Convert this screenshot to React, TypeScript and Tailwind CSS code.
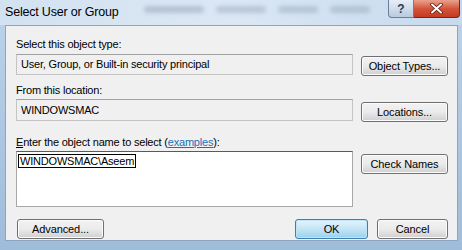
import React from "react";

const font = { fontFamily: '"Segoe UI", "Liberation Sans", Arial, sans-serif' };

function Btn({ children, className = "", primary = false }: { children: React.ReactNode; className?: string; primary?: boolean }) {
  return (
    <div
      className={
        "flex items-center justify-center rounded-[3px] border text-[11px] tracking-[-0.1px] text-black " +
        (primary
          ? "border-[#3c7fb1] bg-gradient-to-b from-[#e5f4fc] via-[#c4e5f6] to-[#98d1ef] shadow-[inset_0_0_0_1px_#bfe3f7] "
          : "border-[#707070] bg-gradient-to-b from-[#f2f2f2] via-[#ebebeb] to-[#cfcfcf] shadow-[inset_0_0_0_1px_#fcfcfc] ") +
        className
      }
    >
      {children}
    </div>
  );
}

export default function App() {
  return (
    <div className="relative w-[462px] h-[250px] overflow-hidden bg-gradient-to-b from-[#bcd3ea] to-[#9fbcdb]" style={font}>
      {/* Title bar */}
      <div className="h-[25px] flex items-start bg-gradient-to-r from-[#d3e2f1] via-[#dbe7f4] to-[#c6daee] relative">
        <div className="pl-[5px] pt-[4px] text-[12.5px] leading-[16px] tracking-[-0.2px] text-black">Select User or Group</div>
        <div className="ml-[26px] mt-[6px] flex gap-3 opacity-40 blur-[2px]">
          <div className="h-[7px] w-[60px] bg-[#7d8fa3] rounded" />
          <div className="h-[7px] w-[50px] bg-[#8799ad] rounded" />
          <div className="h-[7px] w-[40px] bg-[#8799ad] rounded" />
          <div className="h-[7px] w-[40px] bg-[#8799ad] rounded" />
        </div>
        <div className="absolute right-[2px] top-0 flex h-[18px]">
          <div className="w-[26px] h-[18px] rounded-bl-[4px] border border-t-0 border-[#6b7f99] bg-gradient-to-b from-[#e6eef7] to-[#b9cbe0] flex items-center justify-center text-[12px] text-[#2b3b55] font-bold leading-none">?</div>
          <div className="w-[46px] h-[18px] rounded-br-[4px] border border-l-0 border-t-0 border-[#6b2a22] bg-gradient-to-b from-[#e9a18f] via-[#d4553b] to-[#c43a1f] flex items-center justify-center">
            <svg width="13" height="11" viewBox="0 0 13 11">
              <path d="M2 1.5 L11 9.5 M11 1.5 L2 9.5" stroke="#5a1b10" strokeWidth="3.6" strokeLinecap="round" />
              <path d="M2 1.5 L11 9.5 M11 1.5 L2 9.5" stroke="#ffffff" strokeWidth="2" strokeLinecap="round" />
            </svg>
          </div>
        </div>
      </div>
      {/* Client */}
      <div className="ml-[5px] w-[453px] h-[216px] bg-[#f0f0f0] border border-[#8ea4bf] text-[11px] tracking-[-0.2px] text-black">
        <div className="pl-[10px] pr-[9px] pt-[10px] flex flex-col">
          <div className="h-[16px] leading-[16px]">Select this object type:</div>
          <div className="mt-[2px] flex items-start gap-[8px]">
            <div className="w-[337px] h-[21px] border border-[#c4c4c4] border-t-[#a0a0a0] bg-[#f0f0f0] pl-[4px] leading-[19px]">User, Group, or Built-in security principal</div>
            <Btn className="mt-[2px] w-[87px] h-[20px]">Object Types...</Btn>
          </div>
          <div className="mt-[6px] h-[16px] leading-[16px]">From this location:</div>
          <div className="mt-[1px] flex items-start gap-[8px]">
            <div className="w-[337px] h-[22px] border border-[#c4c4c4] border-t-[#a0a0a0] bg-[#f0f0f0] pl-[4px] leading-[20px]">WINDOWSMAC</div>
            <Btn className="mt-[3px] w-[87px] h-[20px]">Locations...</Btn>
          </div>
          <div className="mt-[12px] h-[16px] leading-[16px]">
            <span className="underline">E</span>nter the object name to select (<span className="text-[#1a6fb5] underline">examples</span>):
          </div>
          <div className="mt-[1px] flex items-start gap-[8px]">
            <div className="w-[337px] h-[56px] border border-[#a8a8a8] border-t-[#5a5a5a] bg-white pl-[1px] pt-[1px]">
              <span className="inline-block border border-black px-[1px] leading-[12px]">WINDOWSMAC\Aseem</span>
            </div>
            <Btn className="mt-[3px] w-[87px] h-[20px]">Check Names</Btn>
          </div>
          <div className="mt-[12px] flex items-start">
            <Btn className="ml-[1px] w-[87px] h-[20px]">Advanced...</Btn>
            <Btn primary className="ml-auto w-[73px] h-[20px]">OK</Btn>
            <Btn className="ml-[9px] w-[71px] h-[20px]">Cancel</Btn>
          </div>
        </div>
      </div>
    </div>
  );
}
